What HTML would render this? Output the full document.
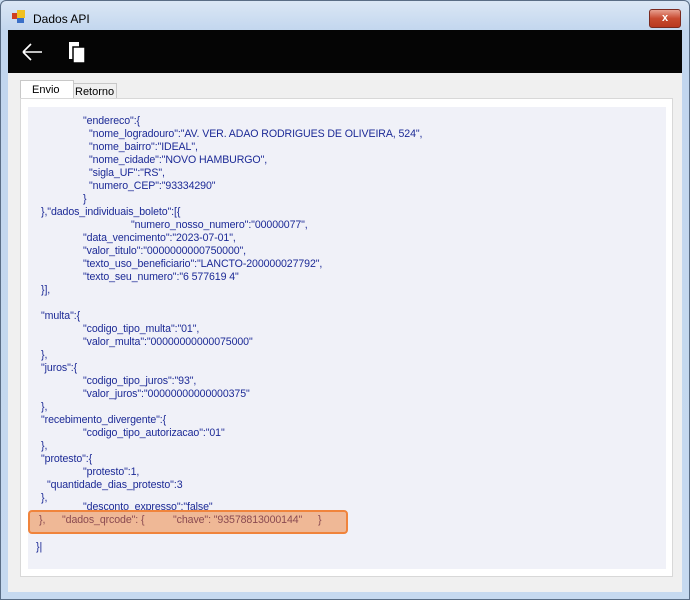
<!DOCTYPE html>
<html><head><style>
body{margin:0;width:690px;height:600px;overflow:hidden;background:#c9dcf0;font-family:"Liberation Sans",sans-serif;}
.win{position:absolute;left:0;top:0;width:688px;height:598px;border:1px solid #5a6d85;border-radius:6px 6px 0 0;background:linear-gradient(#dbe7f5,#c2d6ee 30px,#c6d9ef);}
.title{position:absolute;left:32px;top:11px;font-size:12px;color:#000;}
.close{position:absolute;left:648px;top:8px;width:30px;height:17px;border:1px solid #7a2a20;border-radius:3px;background:linear-gradient(#e8a090,#c84a30 50%,#b83820);color:#fff;font-size:11px;font-weight:bold;text-align:center;line-height:17px;}
.client{position:absolute;left:8px;top:30px;width:674px;height:562px;background:#f0f0f0;}
.tb{position:absolute;left:0;top:0;width:674px;height:43px;background:#050505;}
.tab{position:absolute;font-size:11px;color:#000;}
.panel{position:absolute;left:12px;top:68px;width:651px;height:477px;background:#fff;border:1px solid #d8d8d8;}
.box{position:absolute;left:7px;top:8px;width:638px;height:462px;background:#f0f1f8;}
.l{position:absolute;font-size:10.6px;letter-spacing:-0.1px;color:#1c2a96;white-space:pre;line-height:13px;}
.h{color:#8a4a50}
.hl{position:absolute;left:28px;top:510px;width:316px;height:20px;background:#efb896;border:2px solid #f0843c;border-radius:4px;}
</style></head><body>
<div class="win">
<div style="position:absolute;left:11px;top:12px;width:6px;height:6px;background:#d04020"></div>
<div style="position:absolute;left:16px;top:9px;width:8px;height:8px;background:#f0c020"></div>
<div style="position:absolute;left:16px;top:17px;width:7px;height:5px;background:#3a70c8"></div>
<div class="title">Dados API</div>
<div class="close">x</div>
</div>
<div class="client">
<div class="tb">
<svg width="100" height="43" style="position:absolute;left:0;top:0">
<path d="M15 22 H34 M15 22 L23 14 M15 22 L23 30" stroke="#fff" stroke-width="1.6" fill="none"/>
<rect x="61" y="12" width="10" height="17" fill="#fff"/>
<rect x="65" y="17" width="12" height="16" fill="#fff" stroke="#050505" stroke-width="1.5"/>
</svg>
</div>
<div style="position:absolute;left:12px;top:50px;width:52px;height:19px;background:#fff;border:1px solid #c8c8c8;border-bottom:none"></div>
<div class="tab" style="left:24px;top:54px">Envio</div>
<div style="position:absolute;left:65px;top:53px;width:42px;height:15px;background:#f0f0f0;border:1px solid #c8c8c8;border-bottom:none"></div>
<div class="tab" style="left:67px;top:56px">Retorno</div>
<div class="panel"><div class="box"></div></div>
</div>
<div class="hl"></div>
<div class="l" style="left:83px;top:115px">"endereco":{</div>
<div class="l" style="left:89px;top:128px">"nome_logradouro":"AV. VER. ADAO RODRIGUES DE OLIVEIRA, 524",</div>
<div class="l" style="left:89px;top:141px">"nome_bairro":"IDEAL",</div>
<div class="l" style="left:89px;top:154px">"nome_cidade":"NOVO HAMBURGO",</div>
<div class="l" style="left:89px;top:167px">"sigla_UF":"RS",</div>
<div class="l" style="left:89px;top:180px">"numero_CEP":"93334290"</div>
<div class="l" style="left:83px;top:193px">}</div>
<div class="l" style="left:41px;top:206px">},"dados_individuais_boleto":[{</div>
<div class="l" style="left:131px;top:219px">"numero_nosso_numero":"00000077",</div>
<div class="l" style="left:83px;top:232px">"data_vencimento":"2023-07-01",</div>
<div class="l" style="left:83px;top:245px">"valor_titulo":"0000000000750000",</div>
<div class="l" style="left:83px;top:258px">"texto_uso_beneficiario":"LANCTO-200000027792",</div>
<div class="l" style="left:83px;top:271px">"texto_seu_numero":"6 577619 4"</div>
<div class="l" style="left:41px;top:284px">}],</div>
<div class="l" style="left:41px;top:310px">"multa":{</div>
<div class="l" style="left:83px;top:323px">"codigo_tipo_multa":"01",</div>
<div class="l" style="left:83px;top:336px">"valor_multa":"00000000000075000"</div>
<div class="l" style="left:41px;top:349px">},</div>
<div class="l" style="left:41px;top:362px">"juros":{</div>
<div class="l" style="left:83px;top:375px">"codigo_tipo_juros":"93",</div>
<div class="l" style="left:83px;top:388px">"valor_juros":"00000000000000375"</div>
<div class="l" style="left:41px;top:401px">},</div>
<div class="l" style="left:41px;top:414px">"recebimento_divergente":{</div>
<div class="l" style="left:83px;top:427px">"codigo_tipo_autorizacao":"01"</div>
<div class="l" style="left:41px;top:440px">},</div>
<div class="l" style="left:41px;top:453px">"protesto":{</div>
<div class="l" style="left:83px;top:466px">"protesto":1,</div>
<div class="l" style="left:47px;top:479px">"quantidade_dias_protesto":3</div>
<div class="l" style="left:41px;top:492px">},</div>
<div class="l" style="left:83px;top:501px;height:9px;overflow:hidden">"desconto_expresso":"false"</div>
<div class="l h" style="left:39px;top:514px">},</div>
<div class="l h" style="left:62px;top:514px">"dados_qrcode": {</div>
<div class="l h" style="left:173px;top:514px">"chave": "93578813000144"</div>
<div class="l h" style="left:318px;top:514px">}</div>
<div class="l" style="left:36px;top:541px">}|</div>
</body></html>
